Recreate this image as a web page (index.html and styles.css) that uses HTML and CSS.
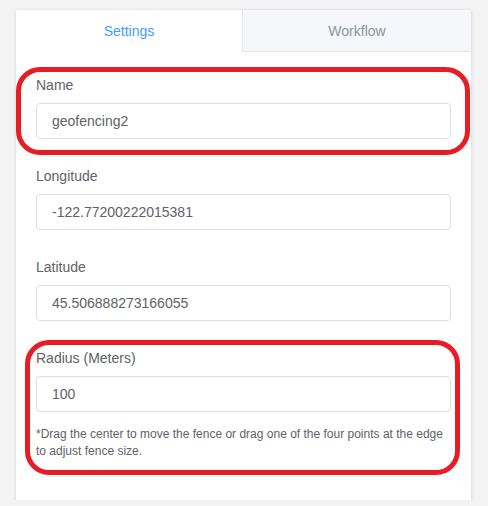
FILE: index.html
```html
<!DOCTYPE html>
<html>
<head>
<meta charset="utf-8">
<link rel="stylesheet" href="styles.css">
</head>
<body>
<div class="card">
  <div class="tabs">
    <div class="tab active">Settings</div>
    <div class="tab">Workflow</div>
  </div>
  <form class="form">
    <div class="item">
      <div class="highlight hl-name"></div>
      <label class="label">Name</label>
      <input class="input" value="geofencing2">
    </div>
    <div class="item">
      <label class="label">Longitude</label>
      <input class="input" value="-122.77200222015381">
    </div>
    <div class="item">
      <label class="label">Latitude</label>
      <input class="input" value="45.506888273166055">
    </div>
    <div class="item">
      <div class="highlight hl-radius"></div>
      <label class="label">Radius (Meters)</label>
      <input class="input" value="100">
      <p class="help">*Drag the center to move the fence or drag one of the four points at the edge to adjust fence size.</p>
    </div>
  </form>
</div>
</body>
</html>
```

FILE: styles.css
```css
html, body {
  margin: 0;
  padding: 0;
  background: #f3f3f3;
  font-family: "Liberation Sans", Arial, sans-serif;
}
.card {
  margin: 10px 0 0 16px;
  width: 455px;
  height: 490px;
  background: #fff;
  box-shadow: 0 1px 4px rgba(0, 0, 0, 0.14);
  display: flex;
  flex-direction: column;
}
.tabs {
  display: flex;
  height: 42px;
}
.tab {
  flex: 0 0 226px;
  display: flex;
  align-items: center;
  justify-content: center;
  font-size: 14px;
  color: #909399;
  background: #f5f7fa;
  border-left: 1px solid #e4e7ed;
  border-bottom: 1px solid #e4e7ed;
  box-sizing: border-box;
}
.tab:last-child {
  flex: 1 1 auto;
}
.tab.active {
  color: #409eff;
  background: #fff;
  border: none;
}
.form {
  margin: 0;
  padding: 23px 20px 0 20px;
  display: flex;
  flex-direction: column;
  gap: 27px;
}
.item {
  position: relative;
  display: flex;
  flex-direction: column;
}
.label {
  font-size: 14px;
  line-height: 20px;
  color: #606266;
  margin-bottom: 8px;
}
.input {
  height: 36px;
  box-sizing: border-box;
  border: 1px solid #dcdfe6;
  border-radius: 4px;
  padding: 0 15px;
  font-family: "Liberation Sans", Arial, sans-serif;
  font-size: 14px;
  color: #606266;
  outline: none;
  background: #fff;
}
.help {
  margin: 14px 0 0 0;
  font-size: 12px;
  line-height: 17px;
  color: #606266;
}
.highlight {
  position: absolute;
  border: 5px solid #e81c24;
  pointer-events: none;
}
.hl-name {
  top: -8px;
  bottom: -16px;
  left: -20px;
  right: -19px;
  border-radius: 24px;
}
.hl-radius {
  top: -8px;
  bottom: -15px;
  left: -11px;
  right: -9px;
  border-radius: 24px;
}
```
